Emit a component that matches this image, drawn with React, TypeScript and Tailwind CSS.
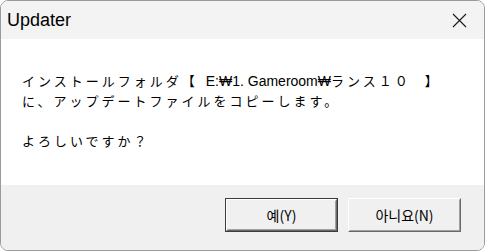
import React from "react";

const jp = { fontFamily: '"Noto Sans CJK JP", "Noto Sans CJK KR", sans-serif' };
const kr = { fontFamily: '"Noto Sans CJK KR", "Liberation Sans", sans-serif' };

function Btn({ label, def }: { label: string; def?: boolean }) {
  return (
    <div
      className={
        def
          ? "w-[113px] h-[34px] border border-[#3c3c3c] flex"
          : "w-[113px] h-[34px] border border-t-white border-l-white border-r-[#696969] border-b-[#696969] flex"
      }
    >
      <div
        className={
          def
            ? "flex-1 flex border border-t-white border-l-white border-r-[#696969] border-b-[#696969]"
            : "flex-1 flex border border-t-[#f0f0f0] border-l-[#f0f0f0] border-r-[#a0a0a0] border-b-[#a0a0a0]"
        }
      >
        <div
          className={
            def
              ? "flex-1 flex items-center justify-center bg-[#f0f0f0] border border-t-[#f0f0f0] border-l-[#f0f0f0] border-r-[#a0a0a0] border-b-[#a0a0a0] text-[14px] text-black"
              : "flex-1 flex items-center justify-center bg-[#f0f0f0] text-[14px] text-black"
          }
          style={kr}
        >
          {label}
        </div>
      </div>
    </div>
  );
}

export default function App() {
  return (
    <div className="w-[485px] h-[251px] bg-white">
      <div className="w-[485px] h-[251px] rounded-[8px] border border-[#9a9a9a] overflow-hidden flex flex-col bg-white">
        <div className="h-[38px] bg-[#f3f3f3] flex items-center justify-between shrink-0">
          <span
            className="pl-[6px] text-[18px] leading-none text-black"
            style={{ fontFamily: '"Liberation Sans", Arial, sans-serif' }}
          >
            Updater
          </span>
          <div className="w-[46px] h-full flex items-center justify-center mr-[2px]">
            <svg width="15" height="15" viewBox="0 0 15 15">
              <path d="M1 1 L14 14 M14 1 L1 14" stroke="#1a1a1a" strokeWidth="1.1" fill="none" />
            </svg>
          </div>
        </div>
        <div className="h-[146px] shrink-0 bg-white pl-[21px] pt-[32px] text-black">
          <div className="text-[13px] leading-[20px] whitespace-nowrap" style={jp}>
            <span className="tracking-[3px]">インストールフォルダ【</span>
            <span className="text-[14px] pl-[8px]" style={{ fontFamily: '"Liberation Sans", "Noto Sans CJK KR", sans-serif' }}>
              {"E:₩1. Gameroom₩"}
            </span>
            <span className="tracking-[3px]">ランス１０</span>
            <span className="pl-[14px]">】</span>
          </div>
          <div className="text-[13px] leading-[20px] tracking-[3px] whitespace-nowrap" style={jp}>
            に、アップデートファイルをコピーします。
          </div>
          <div className="h-[20px]" />
          <div className="text-[13px] leading-[20px] tracking-[3px] whitespace-nowrap" style={jp}>
            よろしいですか？
          </div>
        </div>
        <div className="flex-1 bg-[#f0f0f0] flex justify-end items-start pt-[13px] pr-[23px] gap-[10px]">
          <Btn label="예(Y)" def />
          <Btn label="아니요(N)" />
        </div>
      </div>
    </div>
  );
}
